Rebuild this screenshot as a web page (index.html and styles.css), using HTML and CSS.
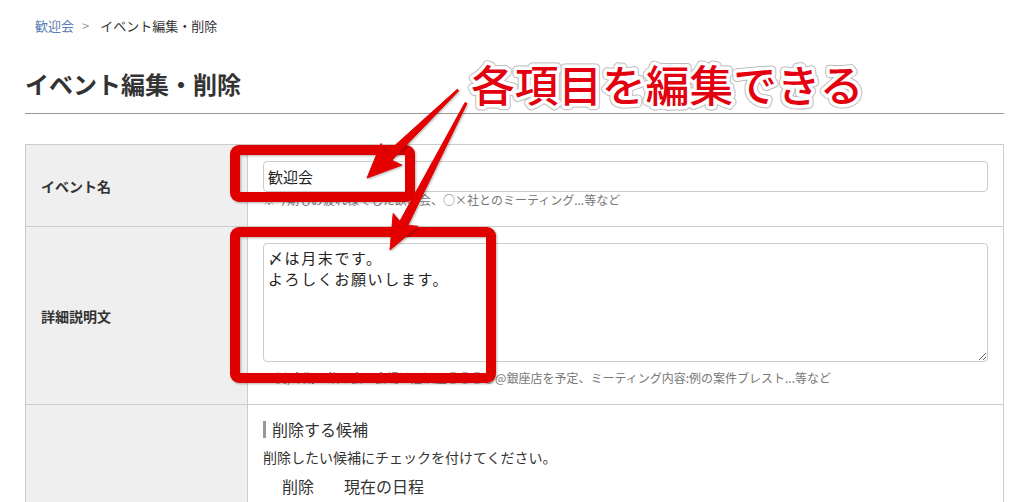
FILE: index.html
```html
<!DOCTYPE html>
<html lang="ja">
<head>
    <meta charset="UTF-8">
    <title>イベント編集・削除</title>
    <link rel="stylesheet" href="styles.css">
</head>
<body>
    <div class="page">
        <div class="breadcrumb">
            <a href="#">歓迎会</a><span class="sep">&gt;</span><span>イベント編集・削除</span>
        </div>

        <h1 class="page-title">イベント編集・削除</h1>

        <table class="edit-table">
            <tr class="row-name">
                <th>イベント名</th>
                <td>
                    <input type="text" class="text-input" value="歓迎会">
                    <p class="hint">※今期もお疲れ様でした飲み会、○×社とのミーティング...等など</p>
                </td>
            </tr>
            <tr class="row-memo">
                <th>詳細説明文</th>
                <td>
                    <textarea class="text-area">〆は月末です。
よろしくお願いします。</textarea>
                    <p class="hint">※例)今期の飲み会の会場は居酒屋○○○○@銀座店を予定、ミーティング内容:例の案件ブレスト...等など</p>
                </td>
            </tr>
            <tr class="row-delete">
                <th></th>
                <td>
                    <h3 class="sub-title">削除する候補</h3>
                    <p class="lead">削除したい候補にチェックを付けてください。</p>
                    <table class="cand-table">
                        <tr>
                            <th>削除</th>
                            <th>現在の日程</th>
                        </tr>
                    </table>
                </td>
            </tr>
        </table>
    </div>

    <!-- annotation drawn over the screenshot -->
    <svg class="note" width="1024" height="502" viewBox="0 0 1024 502">
        <g class="note-boxes">
            <rect x="235" y="150" width="175" height="47" rx="4"/>
            <rect x="235" y="232" width="256" height="146" rx="4"/>
        </g>
        <g class="note-arrows">
            <polygon points="458.7,90.7 391.7,160.3 401.9,165.1 367,178 381.1,143.5 385.5,153.9 457.3,89.3"/>
            <polygon points="466.9,103.5 407.8,225.5 418,226.2 390,250 393.2,213.4 399.8,221.3 465.1,102.5"/>
        </g>
        <text class="note-edge" x="471" y="102">各項目を編集できる</text>
        <text class="note-text" x="471" y="102">各項目を編集できる</text>
    </svg>
</body>
</html>
```

FILE: styles.css
```css
body {
    margin: 0;
    font-family: "Noto Sans CJK JP", "Noto Sans", sans-serif;
    color: #333;
    background: #fff;
}

.page {
    width: 979px;
    margin-left: 25px;
}

.breadcrumb {
    padding: 17px 0 0 10px;
    font-size: 13px;
    line-height: 18px;
    color: #333;
}

.breadcrumb a {
    color: #5b7db5;
    text-decoration: none;
}

.breadcrumb .sep {
    color: #999;
    margin: 0 11px 0 8px;
}

.page-title {
    margin: 33px 0 0;
    padding-bottom: 13px;
    font-size: 24px;
    line-height: 32px;
    font-weight: bold;
    color: #333;
    border-bottom: 1px solid #999;
}

.edit-table {
    width: 979px;
    margin-top: 30px;
    border-collapse: collapse;
    border: 1px solid #ccc;
}

.edit-table > tbody > tr > th,
.edit-table > tr > th {
    width: 191px;
    padding: 0 15px;
    background: #efefef;
    border: 1px solid #ccc;
    text-align: left;
    font-size: 14px;
    font-weight: bold;
    color: #333;
}

.edit-table > tbody > tr > td,
.edit-table > tr > td {
    padding: 16px 15px 18px;
    border: 1px solid #ccc;
    vertical-align: top;
}

.row-memo > td {
    padding-top: 15px;
}

.row-delete > td {
    padding-top: 14px;
}

.text-input {
    display: block;
    box-sizing: border-box;
    width: 100%;
    height: 31px;
    margin: 0;
    padding: 0 4px;
    border: 1px solid #ccc;
    border-radius: 4px;
    font-family: "Noto Sans CJK JP", sans-serif;
    font-size: 15px;
    color: #222;
}

.text-area {
    display: block;
    box-sizing: border-box;
    width: 100%;
    height: 119px;
    margin: 0 0 8px;
    padding: 3px 4px;
    border: 1px solid #ccc;
    border-radius: 4px;
    font-family: "Noto Sans CJK JP", sans-serif;
    font-size: 15px;
    line-height: 21px;
    letter-spacing: 1.6px;
    color: #222;
    resize: vertical;
}

.hint {
    margin: 0;
    font-size: 12px;
    line-height: 16px;
    color: #777;
}

.sub-title {
    margin: 0;
    padding-left: 6px;
    border-left: 3px solid #999;
    font-size: 16px;
    line-height: 17px;
    font-weight: normal;
    color: #333;
}

.lead {
    margin: 9px 0 0;
    font-size: 14px;
    line-height: 20px;
    color: #333;
}

.cand-table {
    margin-top: 9px;
    border-collapse: collapse;
}

.cand-table th {
    padding: 0 11px 0 19px;
    font-size: 16px;
    line-height: 20px;
    font-weight: normal;
    color: #333;
    text-align: left;
}

.note {
    position: absolute;
    top: 0;
    left: 0;
    pointer-events: none;
}

.note-boxes rect {
    fill: none;
    stroke: #e10000;
    stroke-width: 10;
    filter: drop-shadow(1px 1px 1px rgba(0, 0, 0, 0.3));
}

.note-arrows polygon {
    fill: #e40000;
    stroke: #e40000;
    stroke-width: 1;
    stroke-linejoin: round;
    filter: drop-shadow(1px 1px 1px rgba(0, 0, 0, 0.3));
}

.note-edge,
.note-text {
    font-family: "Noto Sans CJK JP", sans-serif;
    font-size: 43.7px;
    font-weight: 500;
}

.note-edge {
    fill: none;
    stroke: #bbb;
    stroke-width: 9;
    stroke-linejoin: round;
}

.note-text {
    fill: #e3000f;
    stroke: #fff;
    stroke-width: 7;
    stroke-linejoin: round;
    paint-order: stroke fill;
}
```
